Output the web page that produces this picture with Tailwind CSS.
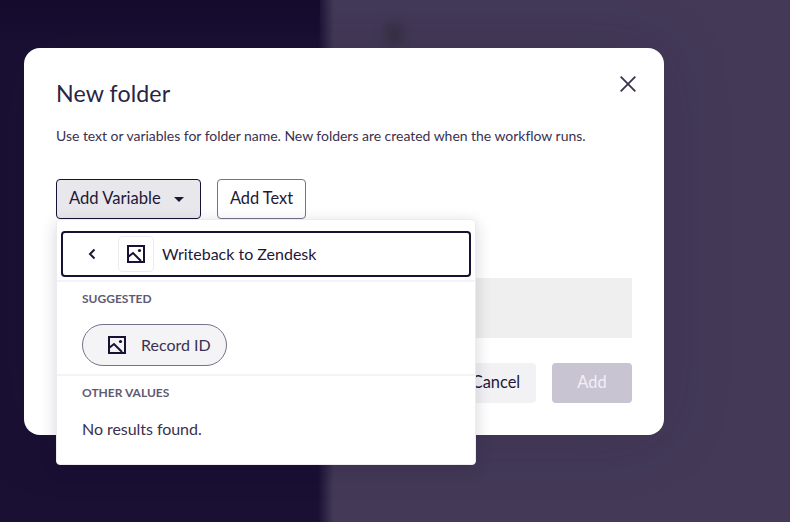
<!DOCTYPE html>
<html lang="en">
<head>
  <meta charset="UTF-8" />
  <title>New folder</title>
  <script src="https://cdn.jsdelivr.net/npm/@tailwindcss/browser@4"></script>
</head>
<body class="relative w-[790px] h-[522px] overflow-hidden font-['Lato',sans-serif] text-[#1f1738]">
  <!-- page behind the modal -->
  <div class="absolute inset-0 bg-[linear-gradient(90deg,#1a1033_0px,#1a1033_318px,#443a58_334px,#443a58_100%)]"></div>
  <div class="absolute left-0 top-0 w-[320px] h-[48px] bg-gradient-to-b from-[#140b2d] to-transparent"></div>
  <div class="absolute left-[384px] top-[22px] w-[20px] h-[24px] rounded-full bg-[#3a3146] blur-[5px]"></div>

  <!-- modal -->
  <div class="absolute left-[24px] top-[48px] w-[640px] h-[387px] bg-white rounded-2xl px-8 pt-[29px] flex flex-col shadow-[0_0_70px_rgba(26,16,51,0.16)]">
    <div class="flex items-start justify-between">
      <h2 class="text-[23.2px] leading-8 tracking-[0.1px] text-[#2a2342]">New folder</h2>
      <button class="mt-[-5px] mr-[-8px] w-6 h-6 flex items-center justify-center text-[#3a3150]">
        <svg width="16" height="16" viewBox="0 0 16 16" fill="none" stroke="currentColor" stroke-width="1.8"><path d="M.7.7 15.3 15.3M15.3.7.7 15.3"/></svg>
      </button>
    </div>
    <p class="mt-[17px] text-sm leading-5 tracking-[-0.03px] text-[#3a3150]">Use text or variables for folder name. New folders are created when the workflow runs.</p>
    <div class="mt-[33px] flex gap-4">
      <button class="h-10 w-[145px] pl-3 flex items-center gap-[13px] bg-[#e8e8ec] border border-[#1a1033] rounded text-[16.6px] leading-[38px]">
        <span class="-mt-[2px]">Add Variable</span>
        <svg width="10" height="5" viewBox="0 0 10 5" fill="#1f1738"><path d="M0 0h10L5 5z"/></svg>
      </button>
      <button class="h-10 w-[89px] pb-[2px] bg-white border border-[#77718a] rounded text-[16.4px]">Add Text</button>
    </div>
    <div class="mt-[59px] h-[60px] bg-[#efefef]"></div>
    <div class="mt-[25px] flex justify-end gap-4">
      <button class="h-10 w-20 pb-[2px] rounded bg-[#f2f2f5] text-[16.4px]">Cancel</button>
      <button class="h-10 w-20 pb-[2px] rounded bg-[#c8c4d2] text-[16.4px] text-[#f2f0f5]">Add</button>
    </div>
  </div>

  <!-- variable dropdown -->
  <div class="absolute left-[56px] top-[219px] w-[420px] h-[246px] bg-white rounded-sm border border-[#ececef] shadow-[0_4px_16px_rgba(26,16,51,0.18)]">
    <div class="mx-[4px] mt-[11px] h-[46px] border-2 border-[#1a1033] rounded flex items-center">
      <svg class="ml-[25px]" width="8" height="12" viewBox="0 0 8 12" fill="none" stroke="#1f1738" stroke-width="2"><path d="M6.5 1.5 2 6l4.5 4.5"/></svg>
      <span class="ml-[22px] w-9 h-9 flex items-center justify-center border border-[#ececef] rounded">
        <svg width="18" height="18" viewBox="0 0 18 18" fill="none" stroke="#1a1033" stroke-width="2"><rect x="1" y="1" width="16" height="16"/><path d="M1 12l5-4 8 8"/><circle cx="12.5" cy="5.5" r="1.6" fill="#1a1033" stroke="none"/></svg>
      </span>
      <span class="ml-2 text-base -mt-[1px]">Writeback to Zendesk</span>
    </div>
    <div class="mt-[3px] border-t-2 border-[#f4f4f6] px-[25px] pt-[9px]">
      <div class="text-xs leading-4 font-bold text-[#5f5a72]">SUGGESTED</div>
      <div class="mt-[17px] w-[145px] h-[42px] rounded-full bg-[#f4f4f6] border border-[#77718a] flex items-center pl-[25px]">
        <svg width="18" height="18" viewBox="0 0 18 18" fill="none" stroke="#1a1033" stroke-width="2"><rect x="1" y="1" width="16" height="16"/><path d="M1 12l5-4 8 8"/><circle cx="12.5" cy="5.5" r="1.6" fill="#1a1033" stroke="none"/></svg>
        <span class="ml-[15px] -mt-[1px] text-base text-[#3a3150]">Record ID</span>
      </div>
    </div>
    <div class="mt-[8px] border-t-2 border-[#f4f4f6] px-[25px] pt-[9px]">
      <div class="text-xs leading-4 font-bold text-[#5f5a72]">OTHER VALUES</div>
      <div class="mt-[18px] text-base leading-5 tracking-[-0.05px] text-[#3a3150]">No results found.</div>
    </div>
  </div>
</body>
</html>
